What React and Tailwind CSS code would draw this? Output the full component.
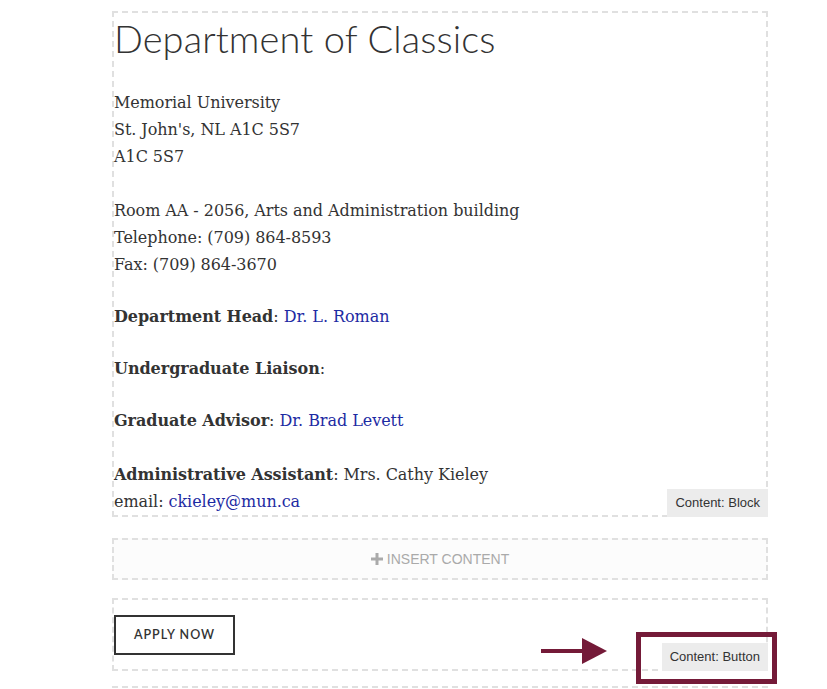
import React from "react";

const serif = { fontFamily: '"DejaVu Serif", Georgia, serif' };
const sans = { fontFamily: '"Liberation Sans", Helvetica, Arial, sans-serif' };

export default function App() {
  return (
    <div className="relative w-[827px] h-[689px] overflow-hidden bg-white">
      <div className="ml-[112px] w-[656px] pt-[11px]">
        {/* Block 1 */}
        <div className="relative border-2 border-dashed border-[#e0e0e0]">
          <h1
            className="text-[38px] leading-[46px] text-[#333] font-light tracking-[0.1px] mt-[2px]"
            style={{ fontFamily: 'Lato, "Open Sans", sans-serif' }}
          >
            Department of Classics
          </h1>
          <div className="text-[16px] leading-[27px] text-[#333] mt-[28px] tracking-[-0.05px]" style={serif}>
            <p>
              Memorial University
              <br />
              St. John's, NL A1C 5S7
              <br />
              A1C 5S7
              <br />
              <br />
              Room AA - 2056, Arts and Administration building
              <br />
              Telephone: (709) 864-8593
              <br />
              Fax: (709) 864-3670
            </p>
            <p className="mt-[25px]">
              <b>Department Head</b>: <a className="text-[#1d2ba3]">Dr. L. Roman</a>
            </p>
            <p className="mt-[25px]">
              <b>Undergraduate Liaison</b>:
            </p>
            <p className="mt-[25px]">
              <b>Graduate Advisor</b>: <a className="text-[#1d2ba3]">Dr. Brad Levett</a>
            </p>
            <p className="mt-[27px]">
              <b>Administrative Assistant</b>: Mrs. Cathy Kieley
              <br />
              email: <a className="text-[#1d2ba3]">ckieley@mun.ca</a>
            </p>
          </div>
          <div
            className="absolute right-[-2px] bottom-[-2px] bg-[#ececec] text-[#333] text-[13px] leading-[28px] px-[8px]"
            style={sans}
          >
            Content: Block
          </div>
        </div>

        {/* Block 2 */}
        <div
          className="mt-[21px] h-[42px] border-2 border-dashed border-[#e0e0e0] bg-[#fcfcfc] flex items-center justify-center text-[#aaa] text-[14px]"
          style={sans}
        >
          <svg width="12" height="12" viewBox="0 0 12 12" className="mr-[4px]">
            <rect x="4.5" y="0" width="3" height="12" fill="#aaa" />
            <rect x="0" y="4.5" width="12" height="3" fill="#aaa" />
          </svg>
          INSERT CONTENT
        </div>

        {/* Block 3 */}
        <div className="relative mt-[18px] h-[73px] border-2 border-dashed border-[#e0e0e0] pt-[15px]">
          <button
            className="block border-2 border-[#333] w-[121px] h-[40px] text-[12.5px] text-[#333] tracking-[1px] font-semibold"
            style={{ fontFamily: 'Lato, "Open Sans", sans-serif' }}
          >
            APPLY NOW
          </button>
          <div
            className="absolute right-[-2px] top-[43px] bg-[#ececec] text-[#333] text-[13px] leading-[28px] px-[8px]"
            style={sans}
          >
            Content: Button
          </div>
        </div>
        <div className="mt-[15px] border-t-2 border-dashed border-[#e0e0e0]" />
      </div>

      {/* Annotation arrow */}
      <svg className="absolute left-[540px] top-[637px]" width="70" height="28" viewBox="0 0 70 28">
        <rect x="1" y="12" width="44" height="4" fill="#741a38" />
        <polygon points="42,1 67,14 42,27" fill="#741a38" />
      </svg>
      {/* Annotation box */}
      <div className="absolute left-[636px] top-[632px] w-[141px] h-[52px] border-[5px] border-[#741a38]" />
    </div>
  );
}
